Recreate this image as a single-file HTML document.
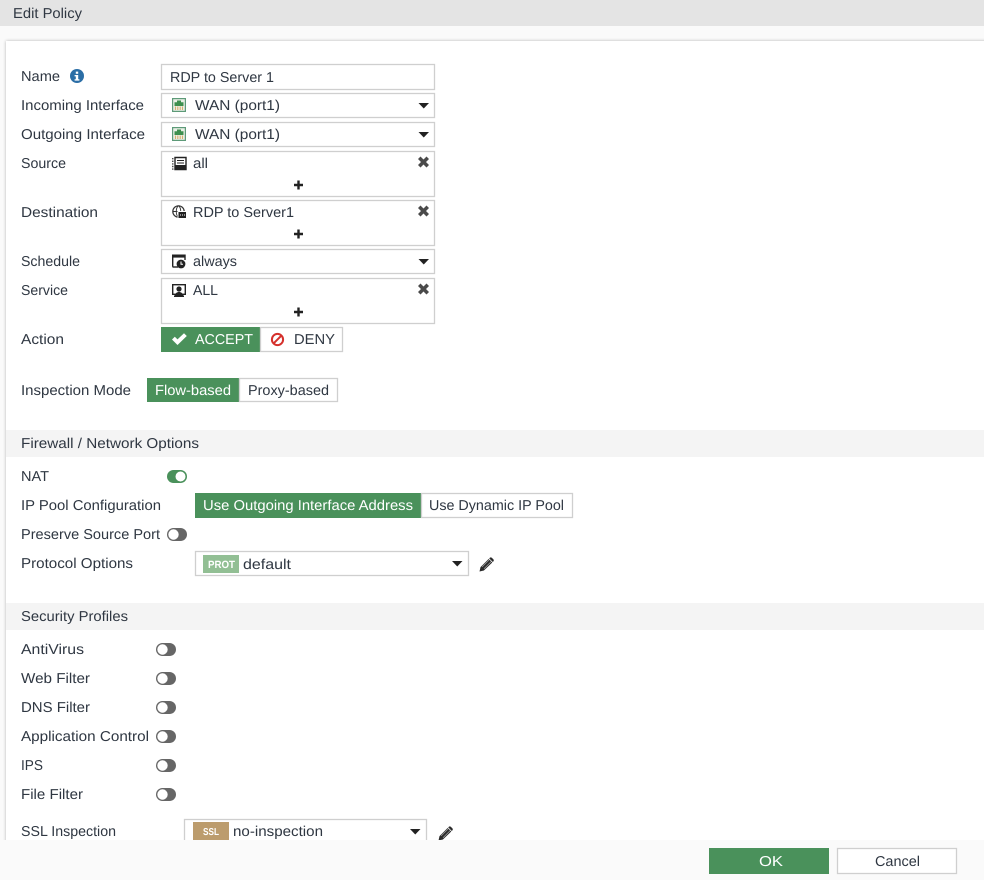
<!DOCTYPE html>
<html lang="en">
<head>
<meta charset="utf-8">
<title>Edit Policy</title>
<style>
html,body{margin:0;padding:0;width:984px;height:880px;overflow:hidden;background:#fafafa}
svg{display:block}
text{font-family:"Liberation Sans",Arial,sans-serif;font-size:14.3px;fill:#2f3742;text-rendering:geometricPrecision}
.w{fill:#fff}
.b{fill:#fff;stroke:#cfcfcf;stroke-width:1.3}
.g{fill:#4a915b}
</style>
</head>
<body>
<svg xmlns="http://www.w3.org/2000/svg" width="984" height="880" viewBox="0 0 984 880">
<defs>
<filter id="sh" x="-2%" y="-2%" width="104%" height="104%"><feGaussianBlur stdDeviation="1.6"/></filter>
<g id="caret"><path d="M0 0H10.5L5.25 5.5Z" fill="#222"/></g>
<g id="x"><path d="M-5.5-3L-3-5.5L0-2.5L3-5.5L5.5-3L2.5 0L5.5 3L3 5.5L0 2.5L-3 5.5L-5.5 3L-2.5 0Z" fill="#4a4a4a"/></g>
<g id="plus"><path d="M-1.2-4.5H1.2V-1.2H4.5V1.2H1.2V4.5H-1.2V1.2H-4.5V-1.2H-1.2Z" fill="#222"/></g>
<g id="off"><rect x="0" y="0" width="20" height="13" rx="6.5" fill="#666"/><circle cx="6.5" cy="6.5" r="5.2" fill="#fff"/></g>
<g id="wan">
<rect x="0.6" y="0.6" width="12.8" height="12.8" fill="#e9efe6" stroke="#5d9a78" stroke-width="1.2"/>
<path d="M5 2.5H9V4.2H11.5V8H2.5V4.2H5Z" fill="#3d8f4e"/>
<path d="M3.5 8.5V12M5.8 8.5V12M8.2 8.5V12M10.5 8.5V12" stroke="#d9ae6e" stroke-width="1.1"/>
</g>
<g id="pencil">
<path d="M0 15L1 10.6L10.2 1.4C10.9.7 11.7.7 12.4 1.4L13.8 2.8C14.5 3.5 14.5 4.3 13.8 5L4.4 14Z" fill="#2b2b2b"/>
<path d="M2.6 10.4L10 3M4.6 12.2L12 4.8" stroke="#a8a8a8" stroke-width=".7" fill="none"/>
<path d="M9.2 1.9L13.3 6" stroke="#fff" stroke-width=".7" fill="none"/>
</g>
</defs>

<!-- page chrome -->
<rect width="984" height="880" fill="#fafafa"/>
<rect width="984" height="26" fill="#e4e4e4"/>
<text x="13" y="18" textLength="69" lengthAdjust="spacingAndGlyphs">Edit Policy</text>

<!-- panel -->
<rect x="6" y="41" width="990" height="810" fill="#000" opacity=".28" filter="url(#sh)"/>
<rect x="6" y="41" width="978" height="799" fill="#fff"/>

<!-- Name -->
<text x="21" y="81" textLength="39" lengthAdjust="spacingAndGlyphs">Name</text>
<circle cx="77" cy="76" r="7" fill="#2b6ea6"/>
<rect x="75.8" y="71.6" width="2.4" height="2.2" fill="#fff"/>
<path d="M74.6 75H78.2V79.2H79.4V80.6H74.6V79.2H75.8V76.4H74.6Z" fill="#fff"/>
<rect class="b" x="161.5" y="64.5" width="273" height="25"/>
<text x="170" y="82" textLength="104" lengthAdjust="spacingAndGlyphs">RDP to Server 1</text>

<!-- Incoming -->
<text x="21" y="110" textLength="123" lengthAdjust="spacingAndGlyphs">Incoming Interface</text>
<rect class="b" x="161.5" y="93.5" width="273" height="24"/>
<use href="#wan" x="172" y="98"/>
<text x="195" y="110" textLength="85" lengthAdjust="spacingAndGlyphs">WAN (port1)</text>
<use href="#caret" x="418.5" y="103"/>

<!-- Outgoing -->
<text x="21" y="139" textLength="124" lengthAdjust="spacingAndGlyphs">Outgoing Interface</text>
<rect class="b" x="161.5" y="122.5" width="273" height="24"/>
<use href="#wan" x="172" y="127"/>
<text x="195" y="139" textLength="85" lengthAdjust="spacingAndGlyphs">WAN (port1)</text>
<use href="#caret" x="418.5" y="132"/>

<!-- Source -->
<text x="21" y="168" textLength="45" lengthAdjust="spacingAndGlyphs">Source</text>
<rect class="b" x="161.5" y="151.5" width="273" height="45"/>
<path d="M175 157.5H186V169.5H175Z" fill="#fff" stroke="#222" stroke-width="1.4"/>
<rect x="175" y="165" width="11" height="5" fill="#222"/>
<path d="M177 160.5H184M177 163H184" stroke="#222" stroke-width="1"/>
<path d="M172.8 158V170" stroke="#222" stroke-width="1.2" stroke-dasharray="1.4 1.2"/>
<text x="193" y="168" textLength="15" lengthAdjust="spacingAndGlyphs">all</text>
<use href="#x" x="423.5" y="162"/>
<use href="#plus" x="298.5" y="185"/>

<!-- Destination -->
<text x="21" y="217" textLength="77" lengthAdjust="spacingAndGlyphs">Destination</text>
<rect class="b" x="161.5" y="200.5" width="273" height="45"/>
<circle cx="178.5" cy="211.5" r="5.7" fill="#fff" stroke="#333" stroke-width="1.2"/>
<path d="M172.8 211.5H184M178.5 205.8C175.5 208 175.5 215 178.5 217.2M178.5 205.8C181.5 208 181.5 215 178.5 217.2" stroke="#333" stroke-width=".9" fill="none"/>
<rect x="177.5" y="211" width="9" height="7.5" fill="#fff"/>
<rect x="178.5" y="212" width="7.5" height="6" fill="#222"/>
<path d="M180 215H185" stroke="#fff" stroke-width="1" stroke-dasharray="1 1"/>
<text x="193" y="217" textLength="101" lengthAdjust="spacingAndGlyphs">RDP to Server1</text>
<use href="#x" x="423.5" y="211"/>
<use href="#plus" x="298.5" y="234"/>

<!-- Schedule -->
<text x="21" y="266" textLength="59" lengthAdjust="spacingAndGlyphs">Schedule</text>
<rect class="b" x="161.5" y="249.5" width="273" height="24"/>
<path d="M172.7 266.8V255.2H185V260" fill="none" stroke="#222" stroke-width="1.4"/>
<rect x="172" y="255" width="13" height="2.6" fill="#222"/>
<path d="M172.5 267H178" stroke="#222" stroke-width="1.4"/>
<circle cx="181" cy="264" r="4.4" fill="#222"/>
<path d="M181 261.5V264.3H183" stroke="#fff" stroke-width="1" fill="none"/>
<text x="193" y="266" textLength="44" lengthAdjust="spacingAndGlyphs">always</text>
<use href="#caret" x="418.5" y="259"/>

<!-- Service -->
<text x="21" y="295" textLength="47" lengthAdjust="spacingAndGlyphs">Service</text>
<rect class="b" x="161.5" y="278.5" width="273" height="45"/>
<rect x="172.7" y="284.7" width="12.6" height="9.6" fill="#fff" stroke="#222" stroke-width="1.4"/>
<circle cx="179" cy="289" r="2.6" fill="#222"/>
<path d="M174.5 296.5C175 293 177 292 179 292C181 292 183 293 183.5 296.5Z" fill="#222"/>
<rect x="174" y="295.5" width="10" height="1.5" fill="#222"/>
<text x="193" y="295" textLength="25" lengthAdjust="spacingAndGlyphs">ALL</text>
<use href="#x" x="423.5" y="289"/>
<use href="#plus" x="298.5" y="312"/>

<!-- Action -->
<text x="21" y="344" textLength="43" lengthAdjust="spacingAndGlyphs">Action</text>
<rect class="g" x="161" y="327" width="99" height="25"/>
<path d="M172 339.5L174.8 336.7L177.5 339.4L184 333.2L186.8 336L177.5 345Z" fill="#fff"/>
<text class="w" x="195" y="344" textLength="58" lengthAdjust="spacingAndGlyphs">ACCEPT</text>
<rect class="b" x="260.5" y="327.5" width="82" height="24"/>
<circle cx="277.5" cy="339.5" r="5.6" fill="none" stroke="#d5312c" stroke-width="2"/>
<path d="M273.8 343.2L281.2 335.8" stroke="#d5312c" stroke-width="2"/>
<text x="294" y="344" textLength="41" lengthAdjust="spacingAndGlyphs">DENY</text>

<!-- Inspection Mode -->
<text x="21" y="395" textLength="110" lengthAdjust="spacingAndGlyphs">Inspection Mode</text>
<rect class="g" x="147" y="378" width="92" height="24"/>
<text class="w" x="155" y="395" textLength="76" lengthAdjust="spacingAndGlyphs">Flow-based</text>
<rect class="b" x="239.5" y="378.5" width="98" height="23"/>
<text x="248" y="395" textLength="81" lengthAdjust="spacingAndGlyphs">Proxy-based</text>

<!-- Firewall -->
<rect x="6" y="430" width="978" height="27" fill="#f4f4f4"/>
<text x="21" y="448" textLength="178" lengthAdjust="spacingAndGlyphs">Firewall / Network Options</text>

<text x="21" y="481" textLength="28" lengthAdjust="spacingAndGlyphs">NAT</text>
<rect class="g" x="167" y="470" width="20" height="13" rx="6.5"/>
<circle cx="180.5" cy="476.5" r="5" fill="#fff"/>

<text x="21" y="510" textLength="140" lengthAdjust="spacingAndGlyphs">IP Pool Configuration</text>
<rect class="g" x="195" y="493" width="226" height="25"/>
<text class="w" x="203" y="510" textLength="210" lengthAdjust="spacingAndGlyphs">Use Outgoing Interface Address</text>
<rect class="b" x="421.5" y="493.5" width="151" height="24"/>
<text x="429" y="510" textLength="135" lengthAdjust="spacingAndGlyphs">Use Dynamic IP Pool</text>

<text x="21" y="539" textLength="139" lengthAdjust="spacingAndGlyphs">Preserve Source Port</text>
<use href="#off" x="167" y="528"/>

<text x="21" y="568" textLength="112" lengthAdjust="spacingAndGlyphs">Protocol Options</text>
<rect class="b" x="195.5" y="551.5" width="273" height="24"/>
<rect x="203" y="555" width="36" height="18" fill="#92bf94"/>
<text class="w" x="208" y="568" textLength="27" lengthAdjust="spacingAndGlyphs" style="font-size:10.5px;font-weight:bold">PROT</text>
<text x="243" y="569" textLength="48" lengthAdjust="spacingAndGlyphs">default</text>
<use href="#caret" x="452" y="561"/>
<use href="#pencil" x="479.5" y="556.5"/>

<!-- Security -->
<rect x="6" y="603" width="978" height="27" fill="#f4f4f4"/>
<text x="21" y="621" textLength="107" lengthAdjust="spacingAndGlyphs">Security Profiles</text>

<text x="21" y="654" textLength="63" lengthAdjust="spacingAndGlyphs">AntiVirus</text>
<use href="#off" x="156" y="643"/>
<text x="21" y="683" textLength="69" lengthAdjust="spacingAndGlyphs">Web Filter</text>
<use href="#off" x="156" y="672"/>
<text x="21" y="712" textLength="69" lengthAdjust="spacingAndGlyphs">DNS Filter</text>
<use href="#off" x="156" y="701"/>
<text x="21" y="741" textLength="128" lengthAdjust="spacingAndGlyphs">Application Control</text>
<use href="#off" x="156" y="730"/>
<text x="21" y="770" textLength="22" lengthAdjust="spacingAndGlyphs">IPS</text>
<use href="#off" x="156" y="759"/>
<text x="21" y="799" textLength="62" lengthAdjust="spacingAndGlyphs">File Filter</text>
<use href="#off" x="156" y="788"/>

<text x="21" y="836" textLength="95" lengthAdjust="spacingAndGlyphs">SSL Inspection</text>
<rect class="b" x="184.5" y="819.5" width="242" height="30"/>
<rect x="193" y="822" width="36" height="20" fill="#bc9c6d"/>
<text class="w" x="203" y="835" textLength="16" lengthAdjust="spacingAndGlyphs" style="font-size:10px;font-weight:bold">SSL</text>
<text x="233" y="836" textLength="90" lengthAdjust="spacingAndGlyphs">no-inspection</text>
<use href="#caret" x="410" y="829"/>
<use href="#pencil" x="438.5" y="825.5"/>

<!-- footer -->
<rect x="0" y="840" width="984" height="40" fill="#fafafa"/>
<rect class="g" x="709" y="848" width="120" height="26"/>
<text class="w" x="759" y="866" textLength="24" lengthAdjust="spacingAndGlyphs">OK</text>
<rect class="b" x="837.5" y="848.5" width="119" height="25"/>
<text x="875" y="866" textLength="45" lengthAdjust="spacingAndGlyphs">Cancel</text>
</svg>
</body>
</html>
